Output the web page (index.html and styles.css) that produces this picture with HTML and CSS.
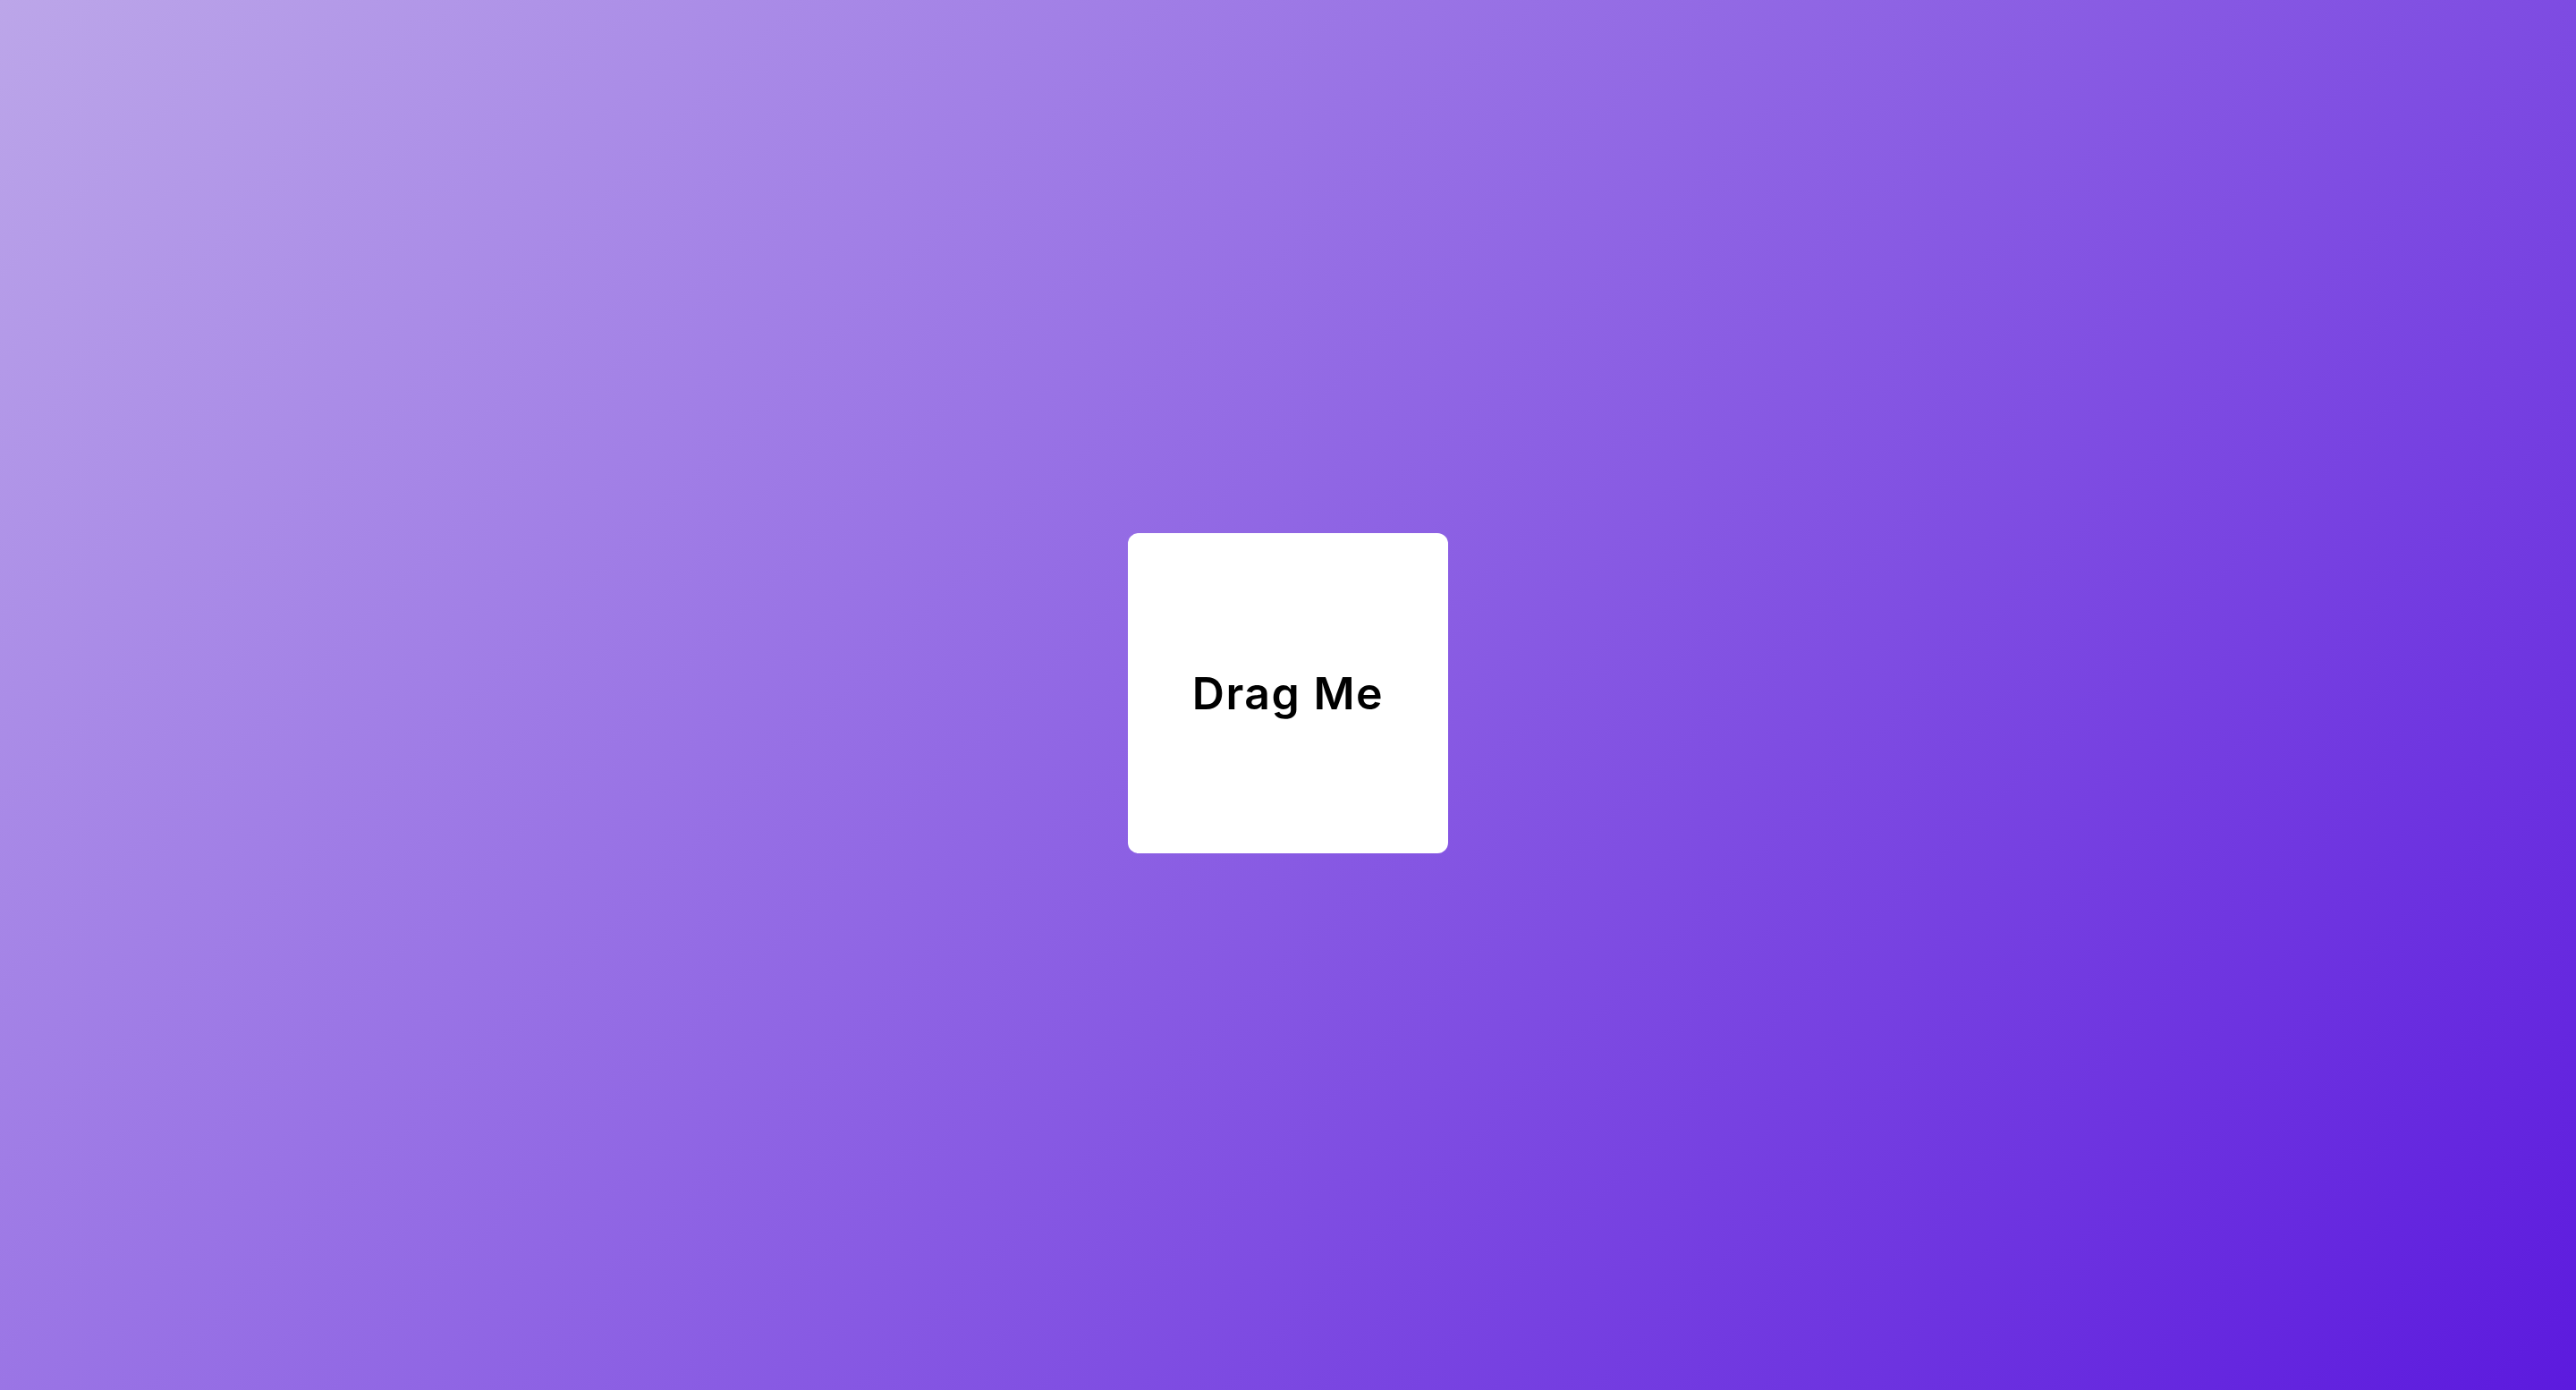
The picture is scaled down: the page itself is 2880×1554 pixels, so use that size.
FILE: index.html
```html
<!DOCTYPE html>
<html>
<head>
<meta charset="utf-8">
<link rel="stylesheet" href="styles.css">
</head>
<body>
<main class="stage">
  <div class="card">Drag Me</div>
</main>
</body>
</html>
```
FILE: styles.css
```css
html, body {
  margin: 0;
  padding: 0;
  height: 100%;
}
body {
  background: linear-gradient(135deg, #bca6e9 0%, #5c1ade 100%);
  font-family: "Inter", "Noto Sans", sans-serif;
}
.stage {
  height: 100vh;
  display: flex;
  align-items: center;
  justify-content: center;
}
.card {
  width: 358px;
  height: 358px;
  margin-top: -4px;
  background: #fff;
  border-radius: 12px;
  display: flex;
  align-items: center;
  justify-content: center;
  font-size: 50px;
  font-weight: 600;
  color: #000;
  letter-spacing: 1.5px;
}
```
